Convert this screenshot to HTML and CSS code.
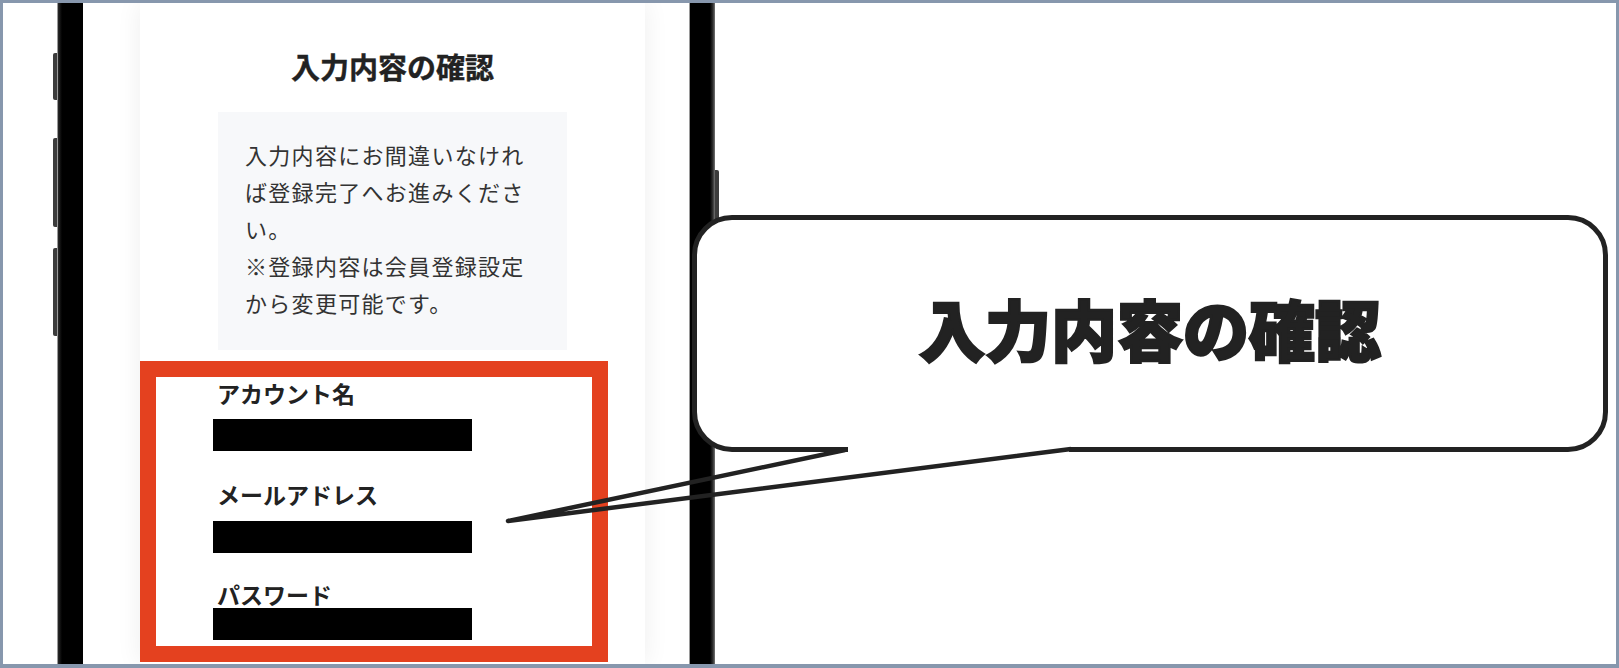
FILE: index.html
```html
<!DOCTYPE html>
<html lang="ja">
<head>
<meta charset="utf-8">
<title>入力内容の確認</title>
<link rel="stylesheet" href="styles.css">
</head>
<body>
<div class="frame">
  <div class="phone">
    <div class="side side-left">
      <span class="btn b1"></span>
      <span class="btn b2"></span>
      <span class="btn b3"></span>
    </div>
    <div class="bezel bezel-left"></div>
    <div class="screen">
      <div class="card">
        <h1 class="title">入力内容の確認</h1>
        <div class="notice">
          <p>入力内容にお間違いなければ登録完了へお進みください。<br>※登録内容は会員登録設定から変更可能です。</p>
        </div>
        <div class="fields">
          <div class="label l1">アカウント名</div>
          <div class="bar r1"></div>
          <div class="label l2">メールアドレス</div>
          <div class="bar r2"></div>
          <div class="label l3">パスワード</div>
          <div class="bar r3"></div>
        </div>
      </div>
    </div>
    <div class="bezel bezel-right"></div>
    <div class="side side-right">
      <span class="btn b4"></span>
    </div>
  </div>
</div>
<div class="bubble"><span class="bubble-text">入力内容の確認</span></div>
<svg class="tail" width="1619" height="668" viewBox="0 0 1619 668">
  <rect x="848" y="443" width="221" height="13" fill="#fff"/>
  <polyline points="845,450 508,521 1071,449" fill="none" stroke="#222" stroke-width="4.5" stroke-linejoin="round"/>
</svg>
</body>
</html>
```

FILE: styles.css
```css
* { box-sizing: border-box; }
html, body { margin: 0; padding: 0; background: #fff; }
body {
  position: relative;
  width: 1619px;
  height: 668px;
  overflow: hidden;
  font-family: "Noto Sans CJK JP", "Noto Sans", sans-serif;
  color: #222;
}
.frame {
  width: 1619px;
  height: 668px;
  border: 3px solid #8797ad;
  border-bottom-width: 4px;
  overflow: hidden;
  display: flex;
  background: #fff;
}
.phone {
  display: flex;
  margin-left: 49px;
  height: 100%;
}
.side {
  width: 5px;
  display: flex;
  flex-direction: column;
}
.btn {
  display: block;
  width: 4px;
  background: #3c3c3c;
}
.side-left .btn { margin-left: 1px; border-radius: 2px 0 0 2px; }
.b1 { margin-top: 50px; height: 47px; }
.b2 { margin-top: 38px; height: 89px; }
.b3 { margin-top: 21px; height: 88px; }
.side-right .btn { border-radius: 0 2px 2px 0; }
.b4 { margin-top: 167px; height: 101px; }
.bezel {
  width: 26px;
  background: #000;
}
.bezel-left {
  border-left: 1px solid #9a9a9a;
  background: linear-gradient(to right, #2a2a2a 0, #000 4px, #000 100%);
}
.bezel-right {
  border-left: 1px solid #9a9a9a;
  background: linear-gradient(to right, #000 0, #000 80%, #333 92%, #777 100%);
}
.screen {
  width: 606px;
  background: #fff;
  padding-left: 57px;
}
.card {
  width: 505px;
  height: 100%;
  background: #fff;
  box-shadow: 0 0 24px rgba(0, 0, 0, 0.07);
  padding-top: 43px;
}
.title {
  margin: 0;
  text-align: center;
  font-size: 29px;
  line-height: 40px;
  font-weight: 700;
  color: #222;
  -webkit-text-stroke: 0.4px #222;
}
.notice {
  width: 349px;
  margin: 26px auto 0;
  background: #f7f8fa;
  padding: 24px 0 29px 27px;
}
.notice p {
  margin: 0;
  width: 292px;
  font-size: 22px;
  letter-spacing: 1.3px;
  line-height: 37px;
  color: #333;
}
.fields {
  width: 468px;
  margin-top: 11px;
  border: 16px solid #e4411f;
  padding: 1px 0 6px;
  background: #fff;
}
.label {
  padding-left: 61px;
  font-size: 23px;
  font-weight: 700;
  line-height: 30px;
  color: #222;
}
.bar {
  margin-left: 57px;
  width: 259px;
  height: 32px;
  background: #000;
}
.r1 { margin-top: 11px; }
.l2 { margin-top: 28px; }
.r2 { margin-top: 12px; }
.l3 { margin-top: 26px; }
.r3 { margin-top: -1px; }
.bubble {
  position: absolute;
  left: 692px;
  top: 215px;
  width: 916px;
  height: 237px;
  border: 5px solid #222;
  border-radius: 40px;
  background: #fff;
  display: flex;
  align-items: center;
  justify-content: center;
  padding-bottom: 14px;
}
.bubble-text {
  font-size: 66px;
  line-height: 1;
  font-weight: 900;
  color: #222;
  -webkit-text-stroke: 2.5px #222;
}
.tail {
  position: absolute;
  left: 0;
  top: 0;
  pointer-events: none;
}
```
